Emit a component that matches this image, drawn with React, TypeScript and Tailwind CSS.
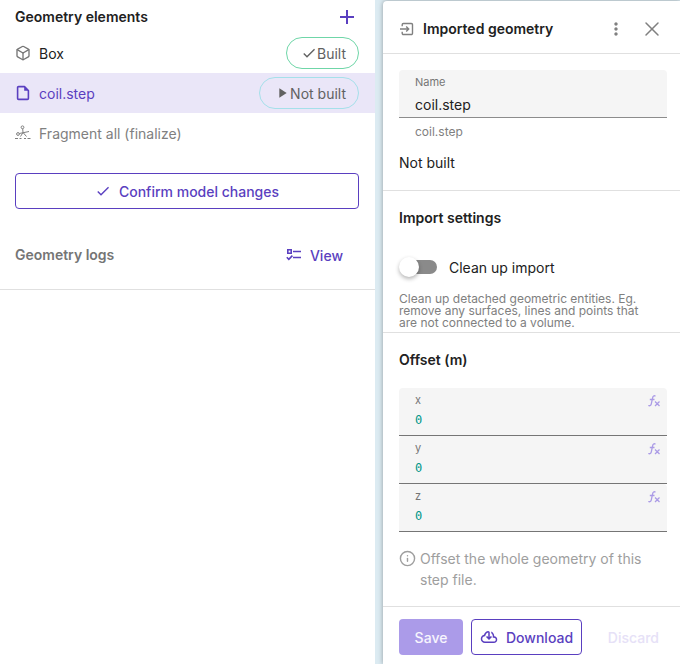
import React from 'react';
import { MdAdd, MdCheck, MdMoreVert, MdPlayArrow } from 'react-icons/md';
import { Box, Info, X } from 'lucide-react';

const FragmentIcon = () => (
  <svg viewBox="0 0 16 16" className="w-4 h-4" fill="none" stroke="currentColor" strokeWidth="1">
    <circle cx="7.5" cy="2.3" r="1.4" />
    <circle cx="3" cy="9" r="1.4" />
    <path d="M7.7 3.700L8 7.500l3.500 4M4.300 8.500l9.700-2M8 7.500L5.500 11.500" />
    <path d="M0 13.500h3M4.500 13.500h2M9 13.500h2M12.500 13.500h3" />
  </svg>
);

const FileIcon = () => (
  <svg viewBox="0 0 16 16" className="w-4 h-4" fill="none" stroke="currentColor" strokeWidth="1.6">
    <path d="M9.500 1.600H3.600a1 1 0 0 0-1 1v10.800a1 1 0 0 0 1 1h8.800a1 1 0 0 0 1-1V5.500z" strokeLinejoin="round" />
    <path d="M9.200 1.600v4.200h4.200z" fill="currentColor" stroke="none" />
  </svg>
);

const ImportIcon = () => (
  <svg viewBox="0 0 16 16" className="w-4 h-4" fill="none" stroke="currentColor" strokeWidth="1.400">
    <path d="M3.200 5.200V3.700a1.200 1.200 0 0 1 1.200-1.200h7.900a1.200 1.200 0 0 1 1.200 1.200v8.600a1.200 1.200 0 0 1-1.200 1.200H4.400a1.200 1.200 0 0 1-1.200-1.200v-1.500" />
    <path d="M1 8h8.500M7.200 5.500L9.700 8l-2.500 2.500" />
  </svg>
);

const ChecklistIcon = () => (
  <svg viewBox="0 0 16 16" className="w-4 h-4" fill="none" stroke="currentColor" strokeWidth="1.6">
    <path d="M1.8 2.8h3.4v3.4H1.8zM7 4.500h8M7 10.500h8M.8 10.300l2 2L6.400 8.600" />
  </svg>
);

const CloudDownloadIcon = () => (
  <svg viewBox="0 -960 960 960" className="w-[18px] h-[18px]" fill="currentColor">
    <path d="M260-160q-91 0-155.5-63T40-377q0-78 47-139t123-78q17-72 85-137t145-65q33 0 56.5 23.5T520-716v242l64-62 56 56-160 160-160-160 56-56 64 62v-242q-76 14-118 73.5T280-520h-20q-58 0-99 41t-41 99q0 58 41 99t99 41h480q42 0 71-29t29-71q0-42-29-71t-71-29h-60v-80q0-48-22-89.5T600-680v-93q74 35 117 103.5T760-520q69 8 114.5 59.5T920-340q0 75-52.5 127.5T740-160H260Z" />
  </svg>
);

const FunctionIcon = () => (
  <svg viewBox="0 0 14 14" className="w-3.5 h-3.5" fill="none" stroke="currentColor" strokeWidth="1.3">
    <path d="M8.5 2.2C7 1.2 6 2 5.600 3.800L4.300 9.800C4 11.500 3 12.200 1.300 11.500M2.800 5.500h4.700M8 7.500l4.500 4.500M12.500 7.500L8 12" />
  </svg>
);

const axes = ['x', 'y', 'z'];

export default function App() {
  return (
    <div className="flex min-h-screen bg-[#dcebf2] font-['Inter',sans-serif] text-sm text-[#212121]">
      {/* Geometry tree */}
      <aside className="flex-1 min-w-0 bg-white">
        <div className="flex items-center justify-between h-[33px] pl-[15px] pr-4">
          <h2 className="font-semibold">Geometry elements</h2>
          <button type="button" aria-label="Add element" className="text-[#5a3fc0]">
            <MdAdd className="w-6 h-6" />
          </button>
        </div>

        <ul>
          <li className="flex items-center h-10 pl-[15px] pr-4">
            <Box className="w-4 h-4 mr-2 text-[#757575]" />
            <span className="flex-1 pt-0.5">Box</span>
            <button type="button" className="flex items-center h-8 pl-3.5 pr-3 rounded-full border border-[#6fd6a8] text-[#616161]">
              <MdCheck className="w-4 h-4" />
              <span className="pt-0.5">Built</span>
            </button>
          </li>
          <li className="flex items-center h-10 pl-[15px] pr-4 bg-[#eae6f8] text-[#5a3fc0]">
            <span className="mr-2"><FileIcon /></span>
            <span className="flex-1 pt-0.5">coil.step</span>
            <button type="button" className="flex items-center h-8 pl-3.5 pr-3 rounded-full border border-[#a5e0ea] text-[#616161]">
              <MdPlayArrow className="w-4 h-4" />
              <span className="pt-0.5">Not built</span>
            </button>
          </li>
          <li className="flex items-center h-10 pl-[15px] pr-4 text-[#808080]">
            <span className="mr-2"><FragmentIcon /></span>
            <span className="pt-0.5">Fragment all (finalize)</span>
          </li>
        </ul>

        <div className="pl-[15px] pr-4 pt-5">
          <button type="button" className="flex items-center justify-center gap-2 w-full h-9 rounded border border-[#5a3fc0] font-medium text-[#5a3fc0]">
            <MdCheck className="w-4 h-4" />
            <span className="pt-0.5">Confirm model changes</span>
          </button>
        </div>

        <div className="flex items-center justify-between h-[81px] pl-[15px] pr-8 pb-3 pt-6 border-b border-[#e0e0e0]">
          <h2 className="font-semibold text-[#757575]">Geometry logs</h2>
          <button type="button" className="flex items-center gap-2 font-medium text-[#5a3fc0]">
            <ChecklistIcon />
            <span className="pt-0.5">View</span>
          </button>
        </div>
      </aside>

      {/* Properties panel */}
      <main className="flex flex-col w-[297px] ml-2 mt-px bg-white rounded-tl shadow-[0_0_5px_rgba(0,0,0,0.35)]">
        <header className="flex items-center h-[53px] pl-4 pr-4 pt-1 border-b border-[#e0e0e0] text-[#808080]">
          <span className="mr-2"><ImportIcon /></span>
          <h1 className="flex-1 font-semibold text-[#212121]">Imported geometry</h1>
          <button type="button" aria-label="More" className="mr-3.5"><MdMoreVert className="w-5 h-5" /></button>
          <button type="button" aria-label="Close"><X className="w-6 h-6" strokeWidth={1.5} /></button>
        </header>

        <section className="h-[137px] pl-4 pr-[13px] pt-4 border-b border-[#e0e0e0]">
          <div className="h-12 px-4 pt-1 rounded-t bg-[#f5f5f5] border-b border-[#8c8c8c]">
            <label htmlFor="name" className="block text-[11px] leading-4 text-[#757575]">Name</label>
            <input id="name" defaultValue="coil.step" className="block w-full h-6 pt-1 bg-transparent outline-none" />
          </div>
          <p className="px-4 pt-1 text-xs leading-5 text-[#808080]">coil.step</p>
          <p className="pt-[11px] leading-5">Not built</p>
        </section>

        <section className="h-[142px] pl-4 pr-7 pt-[17px] border-b border-[#e0e0e0]">
          <h2 className="font-semibold leading-5">Import settings</h2>
          <label className="flex items-center gap-3 pt-7">
            <input type="checkbox" role="switch" className="peer sr-only" />
            <span className="flex items-center w-[38px] h-5">
              <span className="z-10 w-5 h-5 rounded-full bg-white shadow-[0_2px_4px_rgba(0,0,0,0.3)]" />
              <span className="w-7 h-3.5 -ml-2.5 rounded-full bg-[#8a8a8a]" />
            </span>
            <span className="pt-0.5">Clean up import</span>
          </label>
          <p className="pt-[15px] text-xs leading-3 text-[#808080]">
            Clean up detached geometric entities. Eg. remove any surfaces, lines and points that are not connected to a volume.
          </p>
        </section>

        <section className="flex-1 pl-4 pr-[13px] pt-[17px]">
          <h2 className="font-semibold leading-5">Offset (m)</h2>
          <div className="pt-[18px]">
            {axes.map((axis) => (
              <div key={axis} className="flex justify-between h-12 pl-4 pr-1.5 pt-1 rounded-t bg-[#f5f5f5] border-b border-[#757575]">
                <div>
                  <label htmlFor={axis} className="block text-[11px] leading-4 text-[#757575]">{axis}</label>
                  <input id={axis} defaultValue="0" className="block w-40 h-6 bg-transparent outline-none font-['DejaVu_Sans_Mono',monospace] text-xs text-[#009688]" />
                </div>
                <button type="button" aria-label={`Expression for ${axis}`} className="self-start pt-0.5 text-[#ab9be6]">
                  <FunctionIcon />
                </button>
              </div>
            ))}
          </div>
          <div className="flex gap-1 pt-4 text-[#9e9e9e]">
            <Info className="w-[17px] h-[17px] mt-0.5 shrink-0" />
            <p className="leading-[21px]">Offset the whole geometry of this step file.</p>
          </div>
        </section>

        <footer className="flex items-center gap-2 h-[58px] pl-4 pr-[5px] pb-0.5 pt-1 border-t border-[#e0e0e0] font-medium">
          <button type="button" className="w-16 h-9 pt-0.5 rounded bg-[#ab9be9] text-white/90">Save</button>
          <button type="button" className="flex items-center gap-2 h-9 px-2 rounded border border-[#5a3fc0] text-[#5a3fc0]">
            <CloudDownloadIcon />
            <span className="pt-0.5">Download</span>
          </button>
          <button type="button" disabled className="h-9 px-4 pt-0.5 ml-auto text-[#e6e1f7]">Discard</button>
        </footer>
      </main>
    </div>
  );
}
